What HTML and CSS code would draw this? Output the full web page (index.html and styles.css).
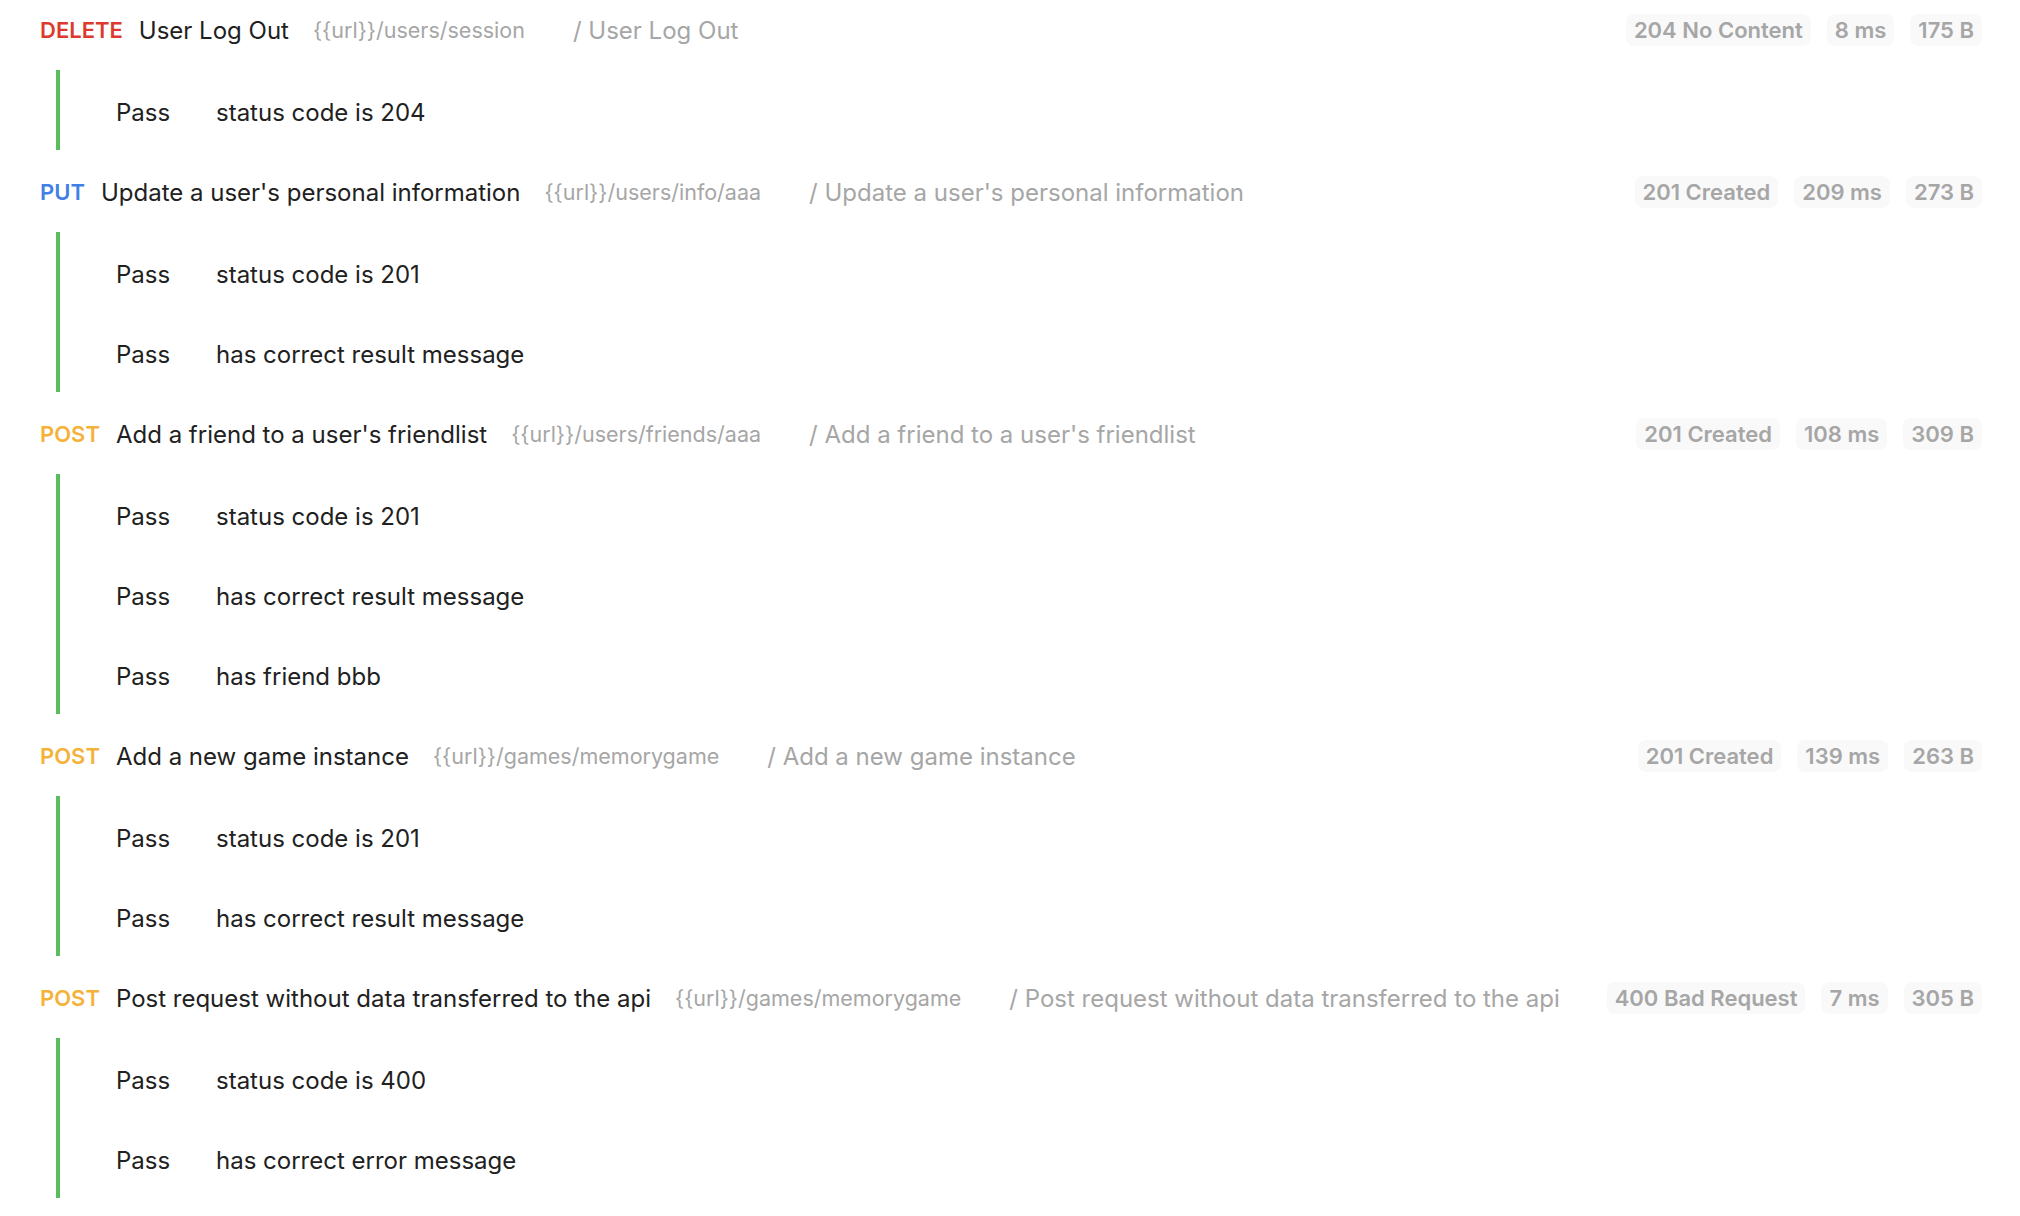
FILE: index.html
```html
<!DOCTYPE html>
<html lang="en">
<head>
<meta charset="utf-8">
<title>Run results</title>
<link rel="stylesheet" href="styles.css">
</head>
<body>
<div class="results">
  <section class="req">
    <div class="req-head">
      <span class="method m-delete">DELETE</span>
      <span class="name">User Log Out</span>
      <span class="url">{{url}}/users/session</span>
      <span class="desc">/ User Log Out</span>
      <div class="badges">
        <span class="badge">204 No Content</span>
        <span class="badge">8 ms</span>
        <span class="badge">175 B</span>
      </div>
    </div>
    <div class="tests">
      <div class="test"><span class="result">Pass</span><span class="tname">status code is 204</span></div>
    </div>
  </section>

  <section class="req">
    <div class="req-head">
      <span class="method m-put">PUT</span>
      <span class="name">Update a user's personal information</span>
      <span class="url">{{url}}/users/info/aaa</span>
      <span class="desc">/ Update a user's personal information</span>
      <div class="badges">
        <span class="badge">201 Created</span>
        <span class="badge">209 ms</span>
        <span class="badge">273 B</span>
      </div>
    </div>
    <div class="tests">
      <div class="test"><span class="result">Pass</span><span class="tname">status code is 201</span></div>
      <div class="test"><span class="result">Pass</span><span class="tname">has correct result message</span></div>
    </div>
  </section>

  <section class="req">
    <div class="req-head">
      <span class="method m-post">POST</span>
      <span class="name">Add a friend to a user's friendlist</span>
      <span class="url">{{url}}/users/friends/aaa</span>
      <span class="desc">/ Add a friend to a user's friendlist</span>
      <div class="badges">
        <span class="badge">201 Created</span>
        <span class="badge">108 ms</span>
        <span class="badge">309 B</span>
      </div>
    </div>
    <div class="tests">
      <div class="test"><span class="result">Pass</span><span class="tname">status code is 201</span></div>
      <div class="test"><span class="result">Pass</span><span class="tname">has correct result message</span></div>
      <div class="test"><span class="result">Pass</span><span class="tname">has friend bbb</span></div>
    </div>
  </section>

  <section class="req">
    <div class="req-head">
      <span class="method m-post">POST</span>
      <span class="name">Add a new game instance</span>
      <span class="url">{{url}}/games/memorygame</span>
      <span class="desc">/ Add a new game instance</span>
      <div class="badges">
        <span class="badge">201 Created</span>
        <span class="badge">139 ms</span>
        <span class="badge">263 B</span>
      </div>
    </div>
    <div class="tests">
      <div class="test"><span class="result">Pass</span><span class="tname">status code is 201</span></div>
      <div class="test"><span class="result">Pass</span><span class="tname">has correct result message</span></div>
    </div>
  </section>

  <section class="req">
    <div class="req-head">
      <span class="method m-post">POST</span>
      <span class="name">Post request without data transferred to the api</span>
      <span class="url">{{url}}/games/memorygame</span>
      <span class="desc">/ Post request without data transferred to the api</span>
      <div class="badges">
        <span class="badge">400 Bad Request</span>
        <span class="badge">7 ms</span>
        <span class="badge">305 B</span>
      </div>
    </div>
    <div class="tests">
      <div class="test"><span class="result">Pass</span><span class="tname">status code is 400</span></div>
      <div class="test"><span class="result">Pass</span><span class="tname">has correct error message</span></div>
    </div>
  </section>
</div>
</body>
</html>
```
FILE: styles.css
```css
html, body {
  margin: 0;
  padding: 0;
  background: #ffffff;
}
body {
  font-family: Inter, "Noto Sans", "Liberation Sans", sans-serif;
  color: #212121;
  overflow: hidden;
}
.results {
  margin-top: -12px;
  padding: 0 38px 0 40px;
}
.req-head {
  height: 82px;
  box-sizing: border-box;
  padding-top: 2px;
  display: flex;
  align-items: center;
  white-space: nowrap;
}
.method {
  font-size: 22px;
  font-weight: 600;
  margin-right: 16px;
}
.m-delete { color: #dc3a2e; }
.m-put { color: #3f80e6; }
.m-post { color: #f5b23a; }
.name {
  font-size: 24px;
  color: #212121;
  margin-right: 24px;
}
.url {
  font-size: 21.5px;
  color: #a6a6a6;
  margin-right: 48px;
}
.desc {
  font-size: 24px;
  color: #a6a6a6;
}
.badges {
  margin-left: auto;
  display: flex;
  gap: 16px;
}
.badge {
  font-size: 22px;
  font-weight: 600;
  color: #a6a6a6;
  background: #f9f9f9;
  border-radius: 8px;
  height: 32px;
  line-height: 32px;
  padding: 0 8px;
}
.tests {
  margin-left: 16px;
  border-left: 4px solid #5cbd5f;
}
.test {
  height: 80px;
  box-sizing: border-box;
  padding-top: 4px;
  display: flex;
  align-items: center;
  padding-left: 56px;
  font-size: 24px;
  color: #212121;
}
.result {
  width: 100px;
}
```
